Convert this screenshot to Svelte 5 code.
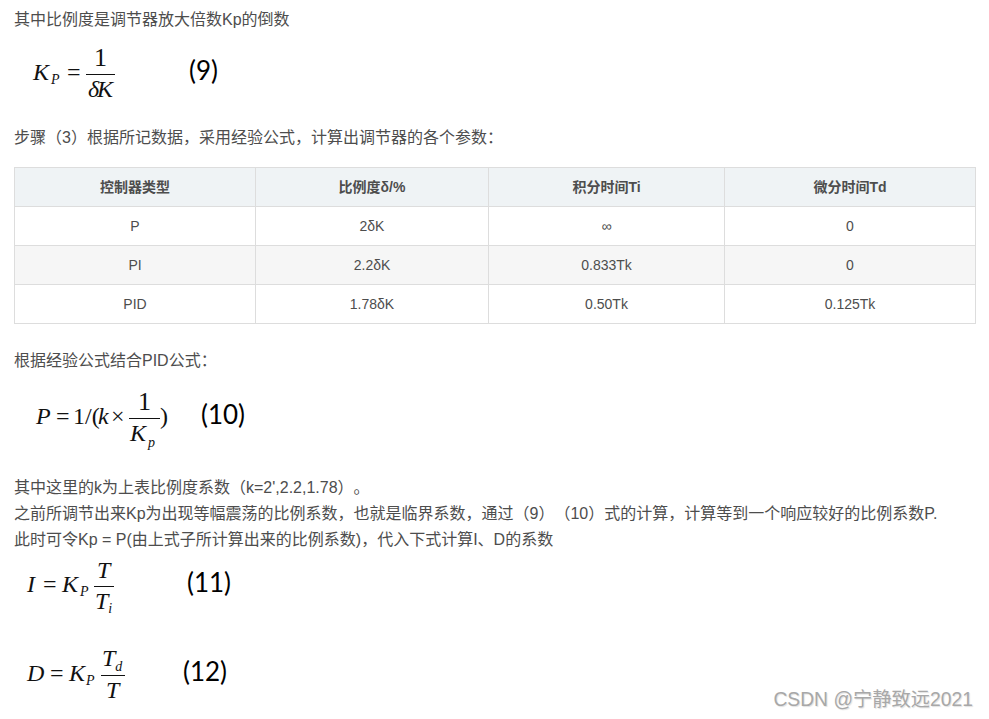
<script>
	const columns = ['控制器类型', '比例度δ/%', '积分时间Ti', '微分时间Td'];
	const rows = [
		['P', '2δK', '∞', '0'],
		['PI', '2.2δK', '0.833Tk', '0'],
		['PID', '1.78δK', '0.50Tk', '0.125Tk']
	];
</script>

<main class="article">
	<p class="first">其中比例度是调节器放大倍数Kp的倒数</p>

	<svg class="formula" width="300" height="92" viewBox="0 33 300 92">
		<text class="mi" x="33" y="80">K</text>
		<text class="mi sub" x="51" y="84">P</text>
		<text class="mn" x="67" y="80">=</text>
		<text class="mn big" x="94" y="66">1</text>
		<line x1="86" y1="74.5" x2="115" y2="74.5" />
		<text class="mi" x="88" y="97" textLength="25">δK</text>
		<text class="tag" x="189" y="80">(9)</text>
	</svg>

	<p>步骤（3）根据所记数据，采用经验公式，计算出调节器的各个参数：</p>

	<table>
		<colgroup>
			<col style="width: 241px" />
			<col style="width: 233px" />
			<col style="width: 236px" />
			<col style="width: 251px" />
		</colgroup>
		<thead>
			<tr>
				{#each columns as col}
					<th>{col}</th>
				{/each}
			</tr>
		</thead>
		<tbody>
			{#each rows as row}
				<tr>
					{#each row as cell}
						<td>{cell}</td>
					{/each}
				</tr>
			{/each}
		</tbody>
	</table>

	<p class="after-table">根据经验公式结合PID公式：</p>

	<svg class="formula" width="300" height="101" viewBox="0 374 300 101">
		<text class="mi" x="36" y="424">P</text>
		<text class="mn" x="56" y="424">=</text>
		<text class="mn" x="73" y="424">1/(</text>
		<text class="mi" x="98" y="424">k</text>
		<text class="mn" x="111" y="424">×</text>
		<text class="mn big" x="138" y="410">1</text>
		<line x1="129" y1="418.5" x2="160" y2="418.5" />
		<text class="mi" x="130" y="441">K</text>
		<text class="mi sub" x="148" y="447">p</text>
		<text class="mn" x="160" y="424">)</text>
		<text class="tag" x="201" y="424">(10)</text>
	</svg>

	<p>其中这里的k为上表比例度系数（k=2',2.2,1.78）。</p>
	<p>之前所调节出来Kp为出现等幅震荡的比例系数，也就是临界系数，通过（9）（10）式的计算，计算等到一个响应较好的比例系数P.</p>
	<p>此时可令Kp = P(由上式子所计算出来的比例系数)，代入下式计算I、D的系数</p>

	<svg class="formula" width="300" height="87" viewBox="0 553 300 87">
		<text class="mi" x="27" y="592">I</text>
		<text class="mn" x="43" y="592">=</text>
		<text class="mi" x="62" y="592">K</text>
		<text class="mi sub" x="80" y="596">P</text>
		<text class="mi" x="97" y="578">T</text>
		<line x1="94" y1="586.5" x2="114" y2="586.5" />
		<text class="mi" x="95" y="609">T<tspan class="sub" dy="4">i</tspan></text>
		<text class="tag" x="187" y="592">(11)</text>
	</svg>

	<svg class="formula" width="300" height="79" viewBox="0 640 300 79">
		<text class="mi" x="27" y="681">D</text>
		<text class="mn" x="50" y="681">=</text>
		<text class="mi" x="69" y="681">K</text>
		<text class="mi sub" x="86" y="685">P</text>
		<text class="mi" x="102" y="666">T<tspan class="sub" dy="5">d</tspan></text>
		<line x1="101" y1="675.5" x2="125" y2="675.5" />
		<text class="mi" x="106" y="698">T</text>
		<text class="tag" x="183" y="681">(12)</text>
	</svg>

	<div class="watermark">CSDN @宁静致远2021</div>
</main>

<style>
	:global(body) {
		background: #fff;
	}

	.article {
		position: relative;
		height: 719px;
		overflow: hidden;
		padding-top: 7px;
		box-sizing: border-box;
		font-family: 'Liberation Sans', 'Noto Sans CJK SC', sans-serif;
		font-size: 16px;
		line-height: 26px;
		color: #4d4d4d;
		text-spacing-trim: space-all;
	}

	p {
		margin: 0 14px;
		white-space: nowrap;
	}

	.after-table {
		margin-top: 24px;
	}

	.formula {
		display: block;
	}

	.formula line {
		stroke: #111;
		stroke-width: 1;
	}

	.formula text {
		font-family: 'Liberation Serif', serif;
		font-size: 24px;
		fill: #111;
	}

	.formula .mi {
		font-style: italic;
	}

	.formula .sub {
		font-size: 14px;
	}

	.formula .big {
		font-size: 26px;
	}

	.formula .tag {
		font-family: Lato, 'Liberation Sans', sans-serif;
		font-size: 26px;
		fill: #000;
	}

	table {
		margin: 16px 0 0 14px;
		width: 962px;
		table-layout: fixed;
		border-collapse: collapse;
		font-size: 14px;
		line-height: 22px;
		text-align: center;
	}

	th,
	td {
		height: 39px;
		padding: 0 8px;
		box-sizing: border-box;
		border: 1px solid #ddd;
	}

	th {
		background: #eff3f5;
		font-weight: 700;
	}

	tbody tr:nth-child(even) {
		background: #f6f6f6;
	}

	.watermark {
		position: absolute;
		right: 16px;
		bottom: 7px;
		font-size: 19.3px;
		line-height: 24px;
		color: #a8a8a8;
		text-shadow: 1px 1px 1px rgba(0, 0, 0, 0.12);
	}
</style>
